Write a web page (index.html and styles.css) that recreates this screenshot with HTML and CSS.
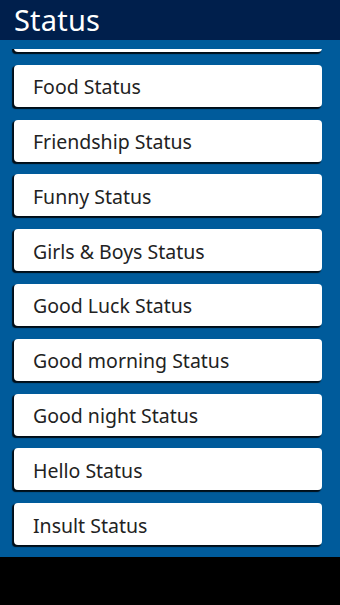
FILE: index.html
```html
<!DOCTYPE html>
<html>
<head>
<meta charset="utf-8">
<link rel="stylesheet" href="styles.css">
</head>
<body>
<div class="app">
  <header class="bar"><h1 class="title">Status</h1></header>
  <div class="viewport">
    <ul class="list">
      <li class="card" aria-hidden="true"></li>
      <li class="card">Food Status</li>
      <li class="card">Friendship Status</li>
      <li class="card">Funny Status</li>
      <li class="card">Girls &amp; Boys Status</li>
      <li class="card">Good Luck Status</li>
      <li class="card">Good morning Status</li>
      <li class="card">Good night Status</li>
      <li class="card">Hello Status</li>
      <li class="card">Insult Status</li>
    </ul>
  </div>
</div>
<div class="navbar"></div>
</body>
</html>
```
FILE: styles.css
```css
html, body {
  margin: 0;
  padding: 0;
  background: #000;
  width: 340px;
  height: 605px;
  overflow: hidden;
  font-family: "Noto Sans", "Open Sans", sans-serif;
}
.app {
  height: 557px;
  background: #005b9b;
  display: flex;
  flex-direction: column;
}
.bar {
  height: 40px;
  flex: 0 0 40px;
  background: #001f4c;
  display: flex;
  align-items: center;
  padding-left: 14px;
}
.title {
  margin: 0;
  color: #fff;
  font-weight: normal;
  font-size: 29px;
  line-height: 40px;
  letter-spacing: 0.2px;
}
.viewport {
  flex: 1;
  margin-top: 9px;
  overflow: hidden;
}
.list {
  list-style: none;
  margin: -39px 0 0 0;
  padding: 0 18px 0 14px;
  display: flex;
  flex-direction: column;
  gap: 12.8px;
}
.card {
  height: 42px;
  flex: 0 0 42px;
  box-sizing: border-box;
  background: #fff;
  border-radius: 4px;
  box-shadow: -1.5px 1.5px 1px rgba(0, 0, 0, 0.85);
  color: #222;
  font-size: 19.5px;
  display: flex;
  align-items: center;
  padding-left: 19px;
  padding-top: 2px;
}
.navbar {
  height: 48px;
  background: #000;
}
```
